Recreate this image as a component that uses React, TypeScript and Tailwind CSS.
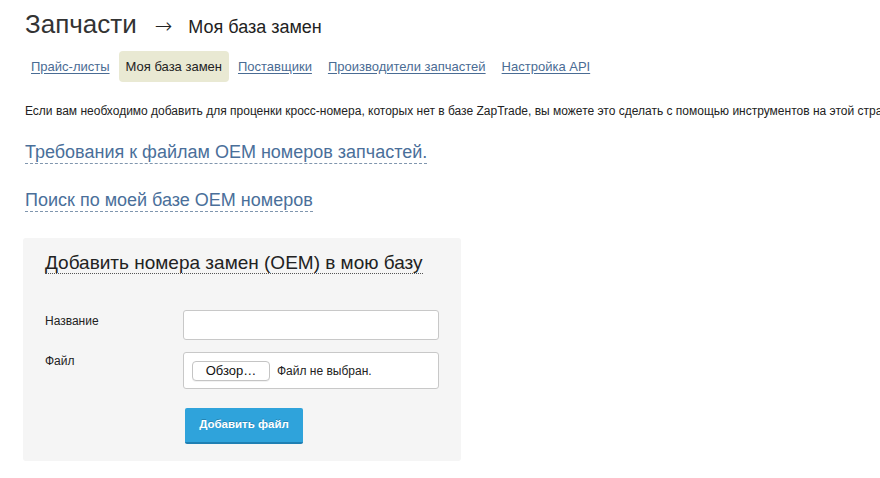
import React from 'react';

const tabs = [
  { label: 'Прайс-листы', active: false },
  { label: 'Моя база замен', active: true },
  { label: 'Поставщики', active: false },
  { label: 'Производители запчастей', active: false },
  { label: 'Настройка API', active: false },
];

export default function App() {
  return (
    <div className="w-[880px] h-[478px] overflow-hidden bg-white text-[#222] font-['Liberation_Sans',Arial,sans-serif]">
      <div className="px-[25px] pt-[9px]">
        {/* Header */}
        <h1 className="flex items-baseline leading-[31px]">
          <span className="text-[26px] text-[#333]">Запчасти</span>
          <span className="text-[21px] text-[#222] ml-[18px] font-extralight font-['DejaVu_Sans',sans-serif]">→</span>
          <span className="text-[18px] text-[#222] ml-[16px]">Моя база замен</span>
        </h1>

        {/* Tabs */}
        <nav className="flex gap-[2px] mt-[8px] -ml-[1px]">
          {tabs.map((t) =>
            t.active ? (
              <span
                key={t.label}
                className="h-[31px] px-[7px] flex items-center rounded-[4px] bg-[#e9e9d3] text-[13px] text-[#222]"
              >
                {t.label}
              </span>
            ) : (
              <a
                key={t.label}
                href="#"
                className="h-[31px] px-[7px] flex items-center text-[13px] text-[#4a6c94] underline underline-offset-2"
              >
                {t.label}
              </a>
            )
          )}
        </nav>

        {/* Intro */}
        <p className="mt-[21px] text-[12px] leading-[16px] whitespace-nowrap">
          Если вам необходимо добавить для проценки кросс-номера, которых нет в базе ZapTrade, вы можете это сделать с помощью инструментов на этой странице.
        </p>

        <div className="mt-[22px]">
          <a href="#" className="inline-block text-[18px] leading-[21px] text-[#4a6f9a] border-b border-dashed border-[#8096ae]">
            Требования к файлам OEM номеров запчастей.
          </a>
        </div>
        <div className="mt-[24px]">
          <a href="#" className="inline-block text-[18px] leading-[21px] text-[#4a6f9a] border-b border-dashed border-[#8096ae]">
            Поиск по моей базе OEM номеров
          </a>
        </div>

        {/* Upload panel */}
        <div className="mt-[25px] -ml-[2px] w-[438px] h-[223px] bg-[#f5f5f5] rounded-[3px] pl-[22px] pt-[14px]">
          <h2 className="inline-block text-[19px] leading-[21px] text-[#222] border-b border-dotted border-[#555]">
            Добавить номера замен (OEM) в мою базу
          </h2>

          <div className="mt-[34px] grid grid-cols-[138px_256px] gap-y-[12px] text-[12px]">
            <label className="pt-[3px] leading-[16px]">Название</label>
            <input
              type="text"
              className="h-[30px] bg-white border border-[#c8c8c8] rounded-[3px] px-2 outline-none"
            />

            <label className="pt-[1px] leading-[16px]">Файл</label>
            <div className="h-[37px] bg-white border border-[#c8c8c8] rounded-[3px] flex items-center pl-[8px]">
              <span className="w-[78px] h-[20px] flex items-center justify-center border border-[#c4c4c4] rounded-[4px] bg-white text-[13px] text-[#111] shadow-[0_1px_0_rgba(0,0,0,0.05)]">
                Обзор…
              </span>
              <span className="ml-[7px] text-[12px] text-[#222]">Файл не выбран.</span>
            </div>

            <span />
            <div className="pt-[7px]">
              <button className="ml-[2px] w-[118px] h-[36px] bg-[#2fa3db] border-b-2 border-[#1f7fb3] rounded-[2px] text-white text-[11.5px] font-bold [text-shadow:0_-1px_0_rgba(0,0,0,0.2)]">
                Добавить файл
              </button>
            </div>
          </div>
        </div>
      </div>
    </div>
  );
}
